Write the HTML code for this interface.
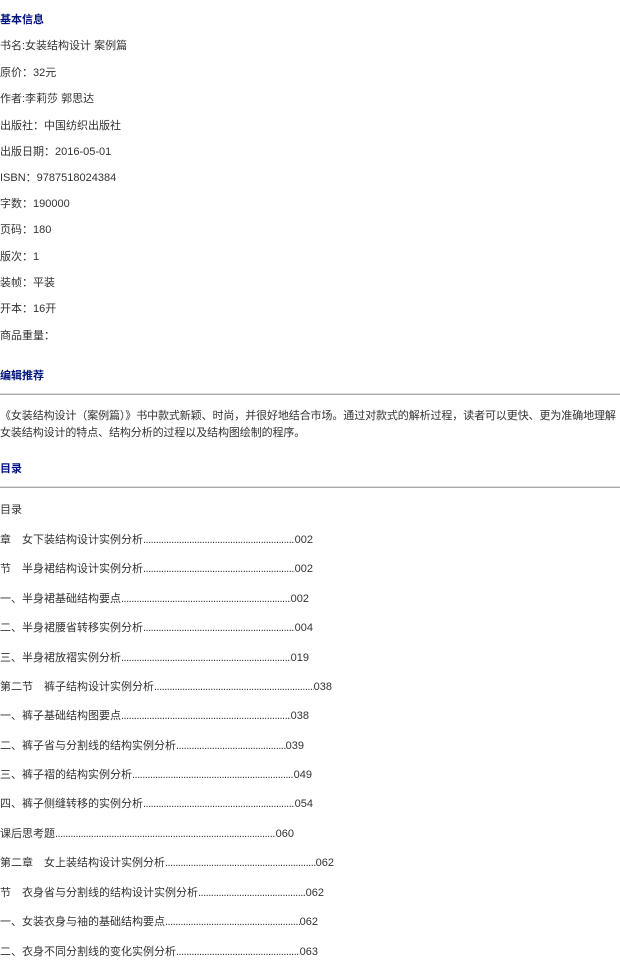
<!DOCTYPE html>
<html><head><meta charset="utf-8"><style>
body{margin:0;width:620px;height:960px;overflow:hidden;background:#fff;font-family:"Liberation Sans","Noto Sans CJK SC",sans-serif;font-size:11px;color:#333;position:relative}
.a{position:absolute;left:0;white-space:nowrap;line-height:14px}
.t{color:#00137f;font-weight:bold;font-size:11px}
.hr{position:absolute;left:0;width:620px;height:1px;background:#aaa;border-top:1px solid #ddd}
.r{position:absolute;left:0;display:flex;white-space:nowrap;line-height:14px}
.r .d{flex:1;overflow:hidden;letter-spacing:-0.5px}
</style></head><body>
<div class="a t" style="top:13px">基本信息</div>
<div class="a" style="top:39px">书名:女装结构设计 案例篇</div>
<div class="a" style="top:66px">原价：32元</div>
<div class="a" style="top:92px">作者:李莉莎 郭思达</div>
<div class="a" style="top:119px">出版社：中国纺织出版社</div>
<div class="a" style="top:145px">出版日期：2016-05-01</div>
<div class="a" style="top:171px">ISBN：9787518024384</div>
<div class="a" style="top:197px">字数：190000</div>
<div class="a" style="top:223px">页码：180</div>
<div class="a" style="top:250px">版次：1</div>
<div class="a" style="top:276px">装帧：平装</div>
<div class="a" style="top:302px">开本：16开</div>
<div class="a" style="top:329px">商品重量：</div>
<div class="a t" style="top:369px">编辑推荐</div>
<div class="hr" style="top:393px"></div>
<div class="a" style="top:408px;line-height:17px;letter-spacing:-0.1px">《女装结构设计（案例篇）》书中款式新颖、时尚，并很好地结合市场。通过对款式的解析过程，读者可以更快、更为准确地理解<br>女装结构设计的特点、结构分析的过程以及结构图绘制的程序。</div>
<div class="a t" style="top:462px">目录</div>
<div class="hr" style="top:486px"></div>
<div class="a" style="top:503px">目录</div>
<div class="r" style="top:533px;width:313px"><span>章　女下装结构设计实例分析</span><span class="d">....................................................................................................</span><span>002</span></div>
<div class="r" style="top:562px;width:313px"><span>节　半身裙结构设计实例分析</span><span class="d">....................................................................................................</span><span>002</span></div>
<div class="r" style="top:592px;width:309px"><span>一、半身裙基础结构要点</span><span class="d">....................................................................................................</span><span>002</span></div>
<div class="r" style="top:621px;width:313px"><span>二、半身裙腰省转移实例分析</span><span class="d">....................................................................................................</span><span>004</span></div>
<div class="r" style="top:651px;width:309px"><span>三、半身裙放褶实例分析</span><span class="d">....................................................................................................</span><span>019</span></div>
<div class="r" style="top:680px;width:332px"><span>第二节　裤子结构设计实例分析</span><span class="d">....................................................................................................</span><span>038</span></div>
<div class="r" style="top:709px;width:309px"><span>一、裤子基础结构图要点</span><span class="d">....................................................................................................</span><span>038</span></div>
<div class="r" style="top:739px;width:304px"><span>二、裤子省与分割线的结构实例分析</span><span class="d">....................................................................................................</span><span>039</span></div>
<div class="r" style="top:768px;width:312px"><span>三、裤子褶的结构实例分析</span><span class="d">....................................................................................................</span><span>049</span></div>
<div class="r" style="top:797px;width:313px"><span>四、裤子侧缝转移的实例分析</span><span class="d">....................................................................................................</span><span>054</span></div>
<div class="r" style="top:827px;width:294px"><span>课后思考题</span><span class="d">....................................................................................................</span><span>060</span></div>
<div class="r" style="top:856px;width:334px"><span>第二章　女上装结构设计实例分析</span><span class="d">....................................................................................................</span><span>062</span></div>
<div class="r" style="top:886px;width:324px"><span>节　衣身省与分割线的结构设计实例分析</span><span class="d">....................................................................................................</span><span>062</span></div>
<div class="r" style="top:915px;width:318px"><span>一、女装衣身与袖的基础结构要点</span><span class="d">....................................................................................................</span><span>062</span></div>
<div class="r" style="top:945px;width:318px"><span>二、衣身不同分割线的变化实例分析</span><span class="d">....................................................................................................</span><span>063</span></div>
</body></html>
